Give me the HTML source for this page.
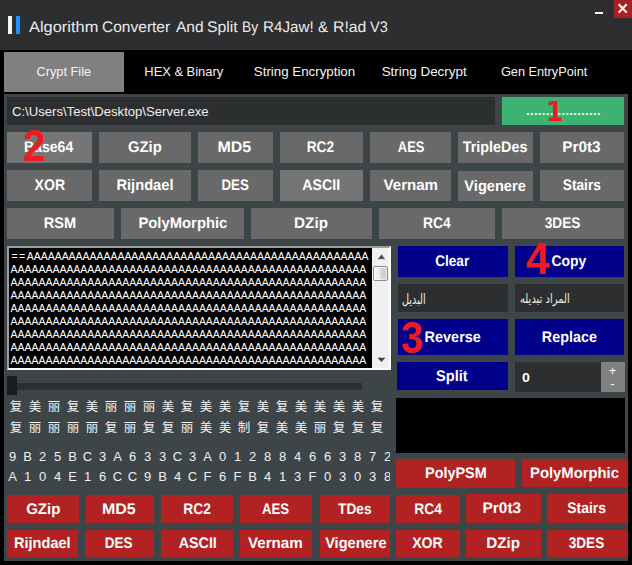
<!DOCTYPE html>
<html><head><meta charset="utf-8"><title>Algorithm Converter</title><style>
html,body{margin:0;padding:0}
body{width:632px;height:565px;background:#000;position:relative;overflow:hidden;font-family:"Liberation Sans","DejaVu Sans",sans-serif}
body>div{position:absolute;white-space:nowrap}
.title{font-size:15.33px;color:#ececec;line-height:1;text-rendering:geometricPrecision}
.title span{position:absolute;top:0;transform-origin:0 0;white-space:nowrap}
.tab{color:#f4f4f4;font-size:13px;text-align:center}
.tab span,.b span{display:inline-block}
.b{color:#fff;font-size:15.33px;font-weight:bold;text-align:center;text-rendering:geometricPrecision}
.ta{color:#fff;font-size:10.5px;line-height:13px;letter-spacing:-0.03px}
.ta .eq{letter-spacing:1.55px;margin-left:0.8px}
.pm{color:#fff;font-size:13px;text-align:center}
.cn{color:#f4f4f4;font-size:12.5px;line-height:14px;overflow:hidden;font-family:"Liberation Sans","Noto Sans CJK SC",sans-serif}
.cn span{display:inline-block;width:19px;text-align:center}
.hx{color:#f0f0f0;font-size:13px;line-height:15px;overflow:hidden}
.hx span{display:inline-block;width:15px;text-align:center}
</style></head><body>
<div style="left:0px;top:0px;width:632px;height:50px;background:#2d2e30;"></div>
<div style="left:8px;top:16px;width:4px;height:18px;background:#f2f2f2;"></div>
<div style="left:16px;top:16px;width:4px;height:18px;background:#1e90ff;"></div>
<div class="title" style="left:0;top:19.75px;width:600px;height:16px"><span style="left:28.7px;transform:scaleX(1.071)">Algorithm</span> <span style="left:102.34px;transform:scaleX(1.013)">Converter</span> <span style="left:176.1px;transform:scaleX(1.013)">And</span> <span style="left:206.83px;transform:scaleX(1.031)">Split</span> <span style="left:242.07px;transform:scaleX(0.903)">By</span> <span style="left:262.56px;transform:scaleX(0.992)">R4Jaw!</span> <span style="left:318.11px;transform:scaleX(0.979)">&amp;</span> <span style="left:332.61px;transform:scaleX(1.031)">R!ad</span> <span style="left:370.4px;transform:scaleX(0.948)">V3</span></div>
<div style="left:595px;top:11.6px;width:8.2px;height:2.7px;background:#fff;"></div>
<div style="left:614px;top:0px;width:18px;height:18px;background:#a82224;"></div>
<svg style="position:absolute;left:614px;top:0" width="18" height="18"><path d="M4.7 4.2L12.7 12.6M12.7 4.2L4.7 12.6" stroke="#fff" stroke-width="2.1" fill="none"/></svg>
<div style="left:4px;top:52px;width:120px;height:40px;background:#808080;"></div>
<div class="tab" style="left:4px;top:52px;width:120px;height:40px;line-height:39px"><span style="transform:scaleX(0.98)">Crypt File</span></div>
<div class="tab" style="left:124px;top:52px;width:120px;height:40px;line-height:39px"><span style="transform:scaleX(0.992)">HEX &amp; Binary</span></div>
<div class="tab" style="left:244px;top:52px;width:120px;height:40px;line-height:39px"><span style="transform:scaleX(1.024)">String Encryption</span></div>
<div class="tab" style="left:364px;top:52px;width:120px;height:40px;line-height:39px"><span style="transform:scaleX(1.033)">String Decrypt</span></div>
<div class="tab" style="left:484px;top:52px;width:120px;height:40px;line-height:39px"><span style="transform:scaleX(0.98)">Gen EntryPoint</span></div>
<div style="left:4px;top:94px;width:624px;height:467px;background:#3d4548;"></div>
<div style="left:7px;top:97px;width:488px;height:28px;background:#2d2e30;"></div>
<div style="left:11.54px;top:104.8px;line-height:1;color:#f0f0f0;transform-origin:0 0;transform:scale(1.008,1.0);font-family:'Liberation Sans',sans-serif;font-size:13px;">C:\Users\Test\Desktop\Server.exe</div>
<div style="left:502px;top:97px;width:122px;height:28px;background:#3cb371;"></div>
<div style="left:525.66px;top:103.25px;line-height:1;color:#fff;transform-origin:0 0;transform:scale(0.984,1.05);font-family:'Liberation Sans',sans-serif;font-weight:bold;font-size:13px;letter-spacing:0.39px;">...................</div>
<div class="b" style="left:7px;top:132px;width:85px;height:31px;line-height:31.6px;background:#757575"><span style="transform:translateX(-1.25px) scaleX(0.92)">Base64</span></div>
<div class="b" style="left:99px;top:132px;width:92px;height:31px;line-height:31.6px;background:#696969"><span style="transform:translateX(-0.55px) scaleX(0.964)">GZip</span></div>
<div class="b" style="left:198px;top:132px;width:75px;height:31px;line-height:31.6px;background:#696969"><span style="transform:translateX(-0.8px) scaleX(1.042)">MD5</span></div>
<div class="b" style="left:280px;top:132px;width:83px;height:31px;line-height:31.6px;background:#696969"><span style="transform:translateX(-1.0px) scaleX(0.893)">RC2</span></div>
<div class="b" style="left:370px;top:132px;width:81px;height:31px;line-height:31.6px;background:#696969"><span style="transform:translateX(0.38px) scaleX(0.842)">AES</span></div>
<div class="b" style="left:458px;top:132px;width:75px;height:31px;line-height:31.6px;background:#696969"><span style="transform:translateX(-0.4px) scaleX(0.936)">TripleDes</span></div>
<div class="b" style="left:540px;top:132px;width:84px;height:31px;line-height:31.6px;background:#696969"><span style="transform:translateX(-0.75px) scaleX(1.005)">Pr0t3</span></div>
<div class="b" style="left:7px;top:170px;width:85px;height:31px;line-height:31.6px;background:#696969"><span style="transform:translateX(0.18px) scaleX(0.919)">XOR</span></div>
<div class="b" style="left:99px;top:170px;width:92px;height:31px;line-height:31.6px;background:#696969"><span style="transform:translateX(0.15px) scaleX(0.958)">Rijndael</span></div>
<div class="b" style="left:198px;top:170px;width:75px;height:31px;line-height:31.6px;background:#696969"><span style="transform:translateX(-0.65px) scaleX(0.867)">DES</span></div>
<div class="b" style="left:280px;top:170px;width:83px;height:31px;line-height:31.6px;background:#757575"><span style="transform:translateX(-0.25px) scaleX(0.927)">ASCII</span></div>
<div class="b" style="left:370px;top:170px;width:81px;height:31px;line-height:31.6px;background:#696969"><span style="transform:translateX(0.12px) scaleX(0.982)">Vernam</span></div>
<div class="b" style="left:458px;top:171px;width:75px;height:30px;line-height:31.6px;background:#696969"><span style="transform:translateX(-0.15px) scaleX(0.953)">Vigenere</span></div>
<div class="b" style="left:540px;top:170px;width:84px;height:31px;line-height:31.6px;background:#696969"><span style="transform:translateX(-0.48px) scaleX(0.896)">Stairs</span></div>
<div class="b" style="left:7px;top:208px;width:107px;height:31px;line-height:31.6px;background:#696969"><span style="transform:translateX(0.0px) scaleX(0.95)">RSM</span></div>
<div class="b" style="left:121px;top:208px;width:123px;height:31px;line-height:31.6px;background:#696969"><span style="transform:translateX(-0.1px) scaleX(0.967)">PolyMorphic</span></div>
<div class="b" style="left:251px;top:208px;width:121px;height:31px;line-height:31.6px;background:#696969"><span style="transform:translateX(0.0px) scaleX(0.994)">DZip</span></div>
<div class="b" style="left:379px;top:208px;width:116px;height:31px;line-height:31.6px;background:#696969"><span style="transform:translateX(-0.55px) scaleX(0.905)">RC4</span></div>
<div class="b" style="left:502px;top:208px;width:122px;height:31px;line-height:31.6px;background:#696969"><span style="transform:translateX(-0.42px) scaleX(0.894)">3DES</span></div>
<div style="left:7px;top:246px;width:384px;height:124px;background:#000;border:2px solid #fff;border-top-color:#9c9c9c;border-left-color:#9c9c9c;box-sizing:border-box;"></div>
<div class="ta" style="left:10.6px;top:250px"><span class="eq">==</span>AAAAAAAAAAAAAAAAAAAAAAAAAAAAAAAAAAAAAAAAAAAAAAAAA</div>
<div class="ta" style="left:10.6px;top:263px">AAAAAAAAAAAAAAAAAAAAAAAAAAAAAAAAAAAAAAAAAAAAAAAAAAA</div>
<div class="ta" style="left:10.6px;top:276px">AAAAAAAAAAAAAAAAAAAAAAAAAAAAAAAAAAAAAAAAAAAAAAAAAAA</div>
<div class="ta" style="left:10.6px;top:289px">AAAAAAAAAAAAAAAAAAAAAAAAAAAAAAAAAAAAAAAAAAAAAAAAAAA</div>
<div class="ta" style="left:10.6px;top:302px">AAAAAAAAAAAAAAAAAAAAAAAAAAAAAAAAAAAAAAAAAAAAAAAAAAA</div>
<div class="ta" style="left:10.6px;top:315px">AAAAAAAAAAAAAAAAAAAAAAAAAAAAAAAAAAAAAAAAAAAAAAAAAAA</div>
<div class="ta" style="left:10.6px;top:328px">AAAAAAAAAAAAAAAAAAAAAAAAAAAAAAAAAAAAAAAAAAAAAAAAAAA</div>
<div class="ta" style="left:10.6px;top:341px">AAAAAAAAAAAAAAAAAAAAAAAAAAAAAAAAAAAAAAAAAAAAAAAAAAA</div>
<div class="ta" style="left:10.6px;top:354px">AAAAAAAAAAAAAAAAAAAAAAAAAAAAAAAAAAAAAAAAAAAAAAAAAAA</div>
<div style="left:372px;top:248px;width:17px;height:120px;background:#f0f0f0;"></div>
<div style="left:373.3px;top:266px;width:14.6px;height:14.6px;background:linear-gradient(90deg,#f6f6f6 0%,#e9e9e9 48%,#d6d6d6 52%,#cdcdcd 100%);border:1px solid #8e8e8e;box-sizing:border-box;border-radius:2px;box-shadow:inset 0 0 0 1px rgba(255,255,255,.6);"></div>
<svg style="position:absolute;left:372px;top:248px" width="17" height="120"><defs><linearGradient id="ag" x1="0" y1="0" x2="1" y2="1"><stop offset="0" stop-color="#222"/><stop offset="1" stop-color="#777"/></linearGradient></defs><path d="M5.8 11.2L9.6 6.6L13.4 11.2Z" fill="url(#ag)"/><path d="M5.6 109.8L13.4 109.8L9.5 114.2Z" fill="url(#ag)"/></svg>
<div class="b" style="left:398px;top:246px;width:110px;height:31px;line-height:31.6px;background:#00008b"><span style="transform:translateX(-1.0px) scaleX(0.888)">Clear</span></div>
<div class="b" style="left:515px;top:246px;width:109px;height:31px;line-height:31.6px;background:#00008b"><span style="transform:translateX(-0.3px) scaleX(0.904)">Copy</span></div>
<div style="left:398px;top:284px;width:110px;height:28px;background:#2d2e30;"></div>
<div style="left:515px;top:284px;width:109px;height:28px;background:#2d2e30;"></div>
<div style="left:402.25px;top:291.9px;line-height:1;color:#ececec;transform-origin:0 0;transform:scale(0.746,1.092);font-family:'DejaVu Sans',sans-serif;font-size:13px;">البديل</div>
<div style="left:519.54px;top:291.9px;line-height:1;color:#ececec;transform-origin:0 0;transform:scale(0.765,0.989);font-family:'DejaVu Sans',sans-serif;font-size:13px;">المراد تبديله</div>
<div class="b" style="left:398px;top:319px;width:110px;height:36px;line-height:37.6px;background:#00008b"><span style="transform:translateX(-0.1px) scaleX(0.943)">Reverse</span></div>
<div class="b" style="left:515px;top:319px;width:109px;height:36px;line-height:37.6px;background:#00008b"><span style="transform:translateX(-0.05px) scaleX(0.936)">Replace</span></div>
<div class="b" style="left:397px;top:362px;width:111px;height:28px;line-height:29.6px;background:#00008b"><span style="transform:translateX(-0.73px) scaleX(0.953)">Split</span></div>
<div style="left:515px;top:362px;width:86.5px;height:29.5px;background:#2d2e30;"></div>
<div style="left:601.3px;top:362px;width:23.7px;height:29.5px;background:#808080;"></div>
<div style="left:522.06px;top:370.99px;line-height:1;color:#fff;transform-origin:0 0;transform:scale(1.088,1.005);font-family:'Liberation Sans',sans-serif;font-weight:bold;font-size:13px;">0</div>
<div class="pm" style="left:601px;top:363px;width:23px;height:15px;line-height:15px">+</div>
<div class="pm" style="left:601px;top:376px;width:23px;height:15px;line-height:15px">-</div>
<div style="left:17px;top:383px;width:345px;height:7px;background:#2d2e30;"></div>
<div style="left:7px;top:376px;width:10px;height:19px;background:#1b1c1d;"></div>
<div class="cn" style="left:6.4px;top:400.3px;width:383.6px"><span>复</span><span>美</span><span>丽</span><span>复</span><span>美</span><span>丽</span><span>丽</span><span>丽</span><span>美</span><span>复</span><span>美</span><span>美</span><span>复</span><span>美</span><span>复</span><span>美</span><span>美</span><span>美</span><span>美</span><span>复</span><span>美</span></div>
<div class="cn" style="left:6.4px;top:420.6px;width:383.6px"><span>复</span><span>丽</span><span>丽</span><span>丽</span><span>丽</span><span>复</span><span>丽</span><span>复</span><span>复</span><span>丽</span><span>美</span><span>美</span><span>制</span><span>复</span><span>美</span><span>美</span><span>丽</span><span>复</span><span>复</span><span>复</span><span>美</span></div>
<div class="hx" style="left:5px;top:449px;width:385px"><span>9</span><span>B</span><span>2</span><span>5</span><span>B</span><span>C</span><span>3</span><span>A</span><span>6</span><span>3</span><span>3</span><span>C</span><span>3</span><span>A</span><span>0</span><span>1</span><span>2</span><span>8</span><span>8</span><span>4</span><span>6</span><span>6</span><span>3</span><span>8</span><span>7</span><span>2</span></div>
<div class="hx" style="left:5px;top:469px;width:385px"><span>A</span><span>1</span><span>0</span><span>4</span><span>E</span><span>1</span><span>6</span><span>C</span><span>C</span><span>9</span><span>B</span><span>4</span><span>C</span><span>F</span><span>6</span><span>F</span><span>B</span><span>4</span><span>1</span><span>3</span><span>F</span><span>0</span><span>3</span><span>0</span><span>3</span><span>8</span></div>
<div style="left:396px;top:398px;width:229px;height:54.6px;background:#000;"></div>
<div class="b r" style="left:396px;top:459px;width:119px;height:28.75px;line-height:29.6px;background:#b22222"><span style="transform:translateX(0.05px) scaleX(0.94)">PolyPSM</span></div>
<div class="b r" style="left:522px;top:459px;width:105px;height:28px;line-height:29.6px;background:#b22222"><span style="transform:translateX(-0.5px) scaleX(0.967)">PolyMorphic</span></div>
<div class="b r" style="left:7px;top:495px;width:72px;height:28px;line-height:29.6px;background:#b22222"><span style="transform:translateX(-0.2px) scaleX(0.979)">GZip</span></div>
<div class="b r" style="left:86px;top:495px;width:68px;height:28px;line-height:29.6px;background:#b22222"><span style="transform:translateX(-1.3px) scaleX(1.042)">MD5</span></div>
<div class="b r" style="left:161px;top:495px;width:72px;height:28px;line-height:29.6px;background:#b22222"><span style="transform:translateX(-0.25px) scaleX(0.897)">RC2</span></div>
<div class="b r" style="left:240px;top:495px;width:72px;height:28px;line-height:29.6px;background:#b22222"><span style="transform:translateX(-0.18px) scaleX(0.859)">AES</span></div>
<div class="b r" style="left:320px;top:495px;width:70px;height:28px;line-height:29.6px;background:#b22222"><span style="transform:translateX(0.05px) scaleX(0.892)">TDes</span></div>
<div class="b r" style="left:396px;top:495px;width:64px;height:28px;line-height:29.6px;background:#b22222"><span style="transform:translateX(-0.25px) scaleX(0.905)">RC4</span></div>
<div class="b r" style="left:466px;top:494px;width:75px;height:29px;line-height:29.6px;background:#b22222"><span style="transform:translateX(-1.3px) scaleX(1.008)">Pr0t3</span></div>
<div class="b r" style="left:547px;top:494px;width:80px;height:29px;line-height:29.6px;background:#b22222"><span style="transform:translateX(-0.73px) scaleX(0.908)">Stairs</span></div>
<div class="b r" style="left:7px;top:530px;width:71px;height:27px;line-height:27.6px;background:#b22222"><span style="transform:translateX(-0.5px) scaleX(0.95)">Rijndael</span></div>
<div class="b r" style="left:85px;top:530px;width:69px;height:27px;line-height:27.6px;background:#b22222"><span style="transform:translateX(-1.1px) scaleX(0.883)">DES</span></div>
<div class="b r" style="left:161px;top:530px;width:72px;height:27px;line-height:27.6px;background:#b22222"><span style="transform:translateX(0.35px) scaleX(0.932)">ASCII</span></div>
<div class="b r" style="left:240px;top:530px;width:72px;height:27px;line-height:27.6px;background:#b22222"><span style="transform:translateX(-0.33px) scaleX(0.988)">Vernam</span></div>
<div class="b r" style="left:320px;top:530px;width:70px;height:27px;line-height:27.6px;background:#b22222"><span style="transform:translateX(0.6px) scaleX(0.952)">Vigenere</span></div>
<div class="b r" style="left:396px;top:530px;width:64px;height:27px;line-height:27.6px;background:#b22222"><span style="transform:translateX(-0.12px) scaleX(0.925)">XOR</span></div>
<div class="b r" style="left:466px;top:530px;width:75px;height:27px;line-height:27.6px;background:#b22222"><span style="transform:translateX(0.2px) scaleX(0.994)">DZip</span></div>
<div class="b r" style="left:547px;top:530px;width:80px;height:27px;line-height:27.6px;background:#b22222"><span style="transform:translateX(-0.58px) scaleX(0.887)">3DES</span></div>
<div style="left:546.06px;top:99.02px;line-height:1;color:#ed1c24;transform-origin:0 0;transform:scale(0.905,0.951);font-family:'DejaVu Sans',sans-serif;font-weight:bold;font-size:28px;">1</div>
<div style="left:22.62px;top:123.06px;line-height:1;color:#ed1c24;transform-origin:0 0;transform:scale(0.918,1.018);font-family:'Liberation Sans',sans-serif;font-weight:bold;font-size:44px;">2</div>
<div style="left:401.19px;top:315.22px;line-height:1;color:#ed1c24;transform-origin:0 0;transform:scale(0.909,1.024);font-family:'Liberation Sans',sans-serif;font-weight:bold;font-size:44px;">3</div>
<div style="left:526.2px;top:236.73px;line-height:1;color:#ed1c24;transform-origin:0 0;transform:scale(1.002,1.045);font-family:'Liberation Sans',sans-serif;font-weight:bold;font-size:42px;">4</div>
</body></html>
